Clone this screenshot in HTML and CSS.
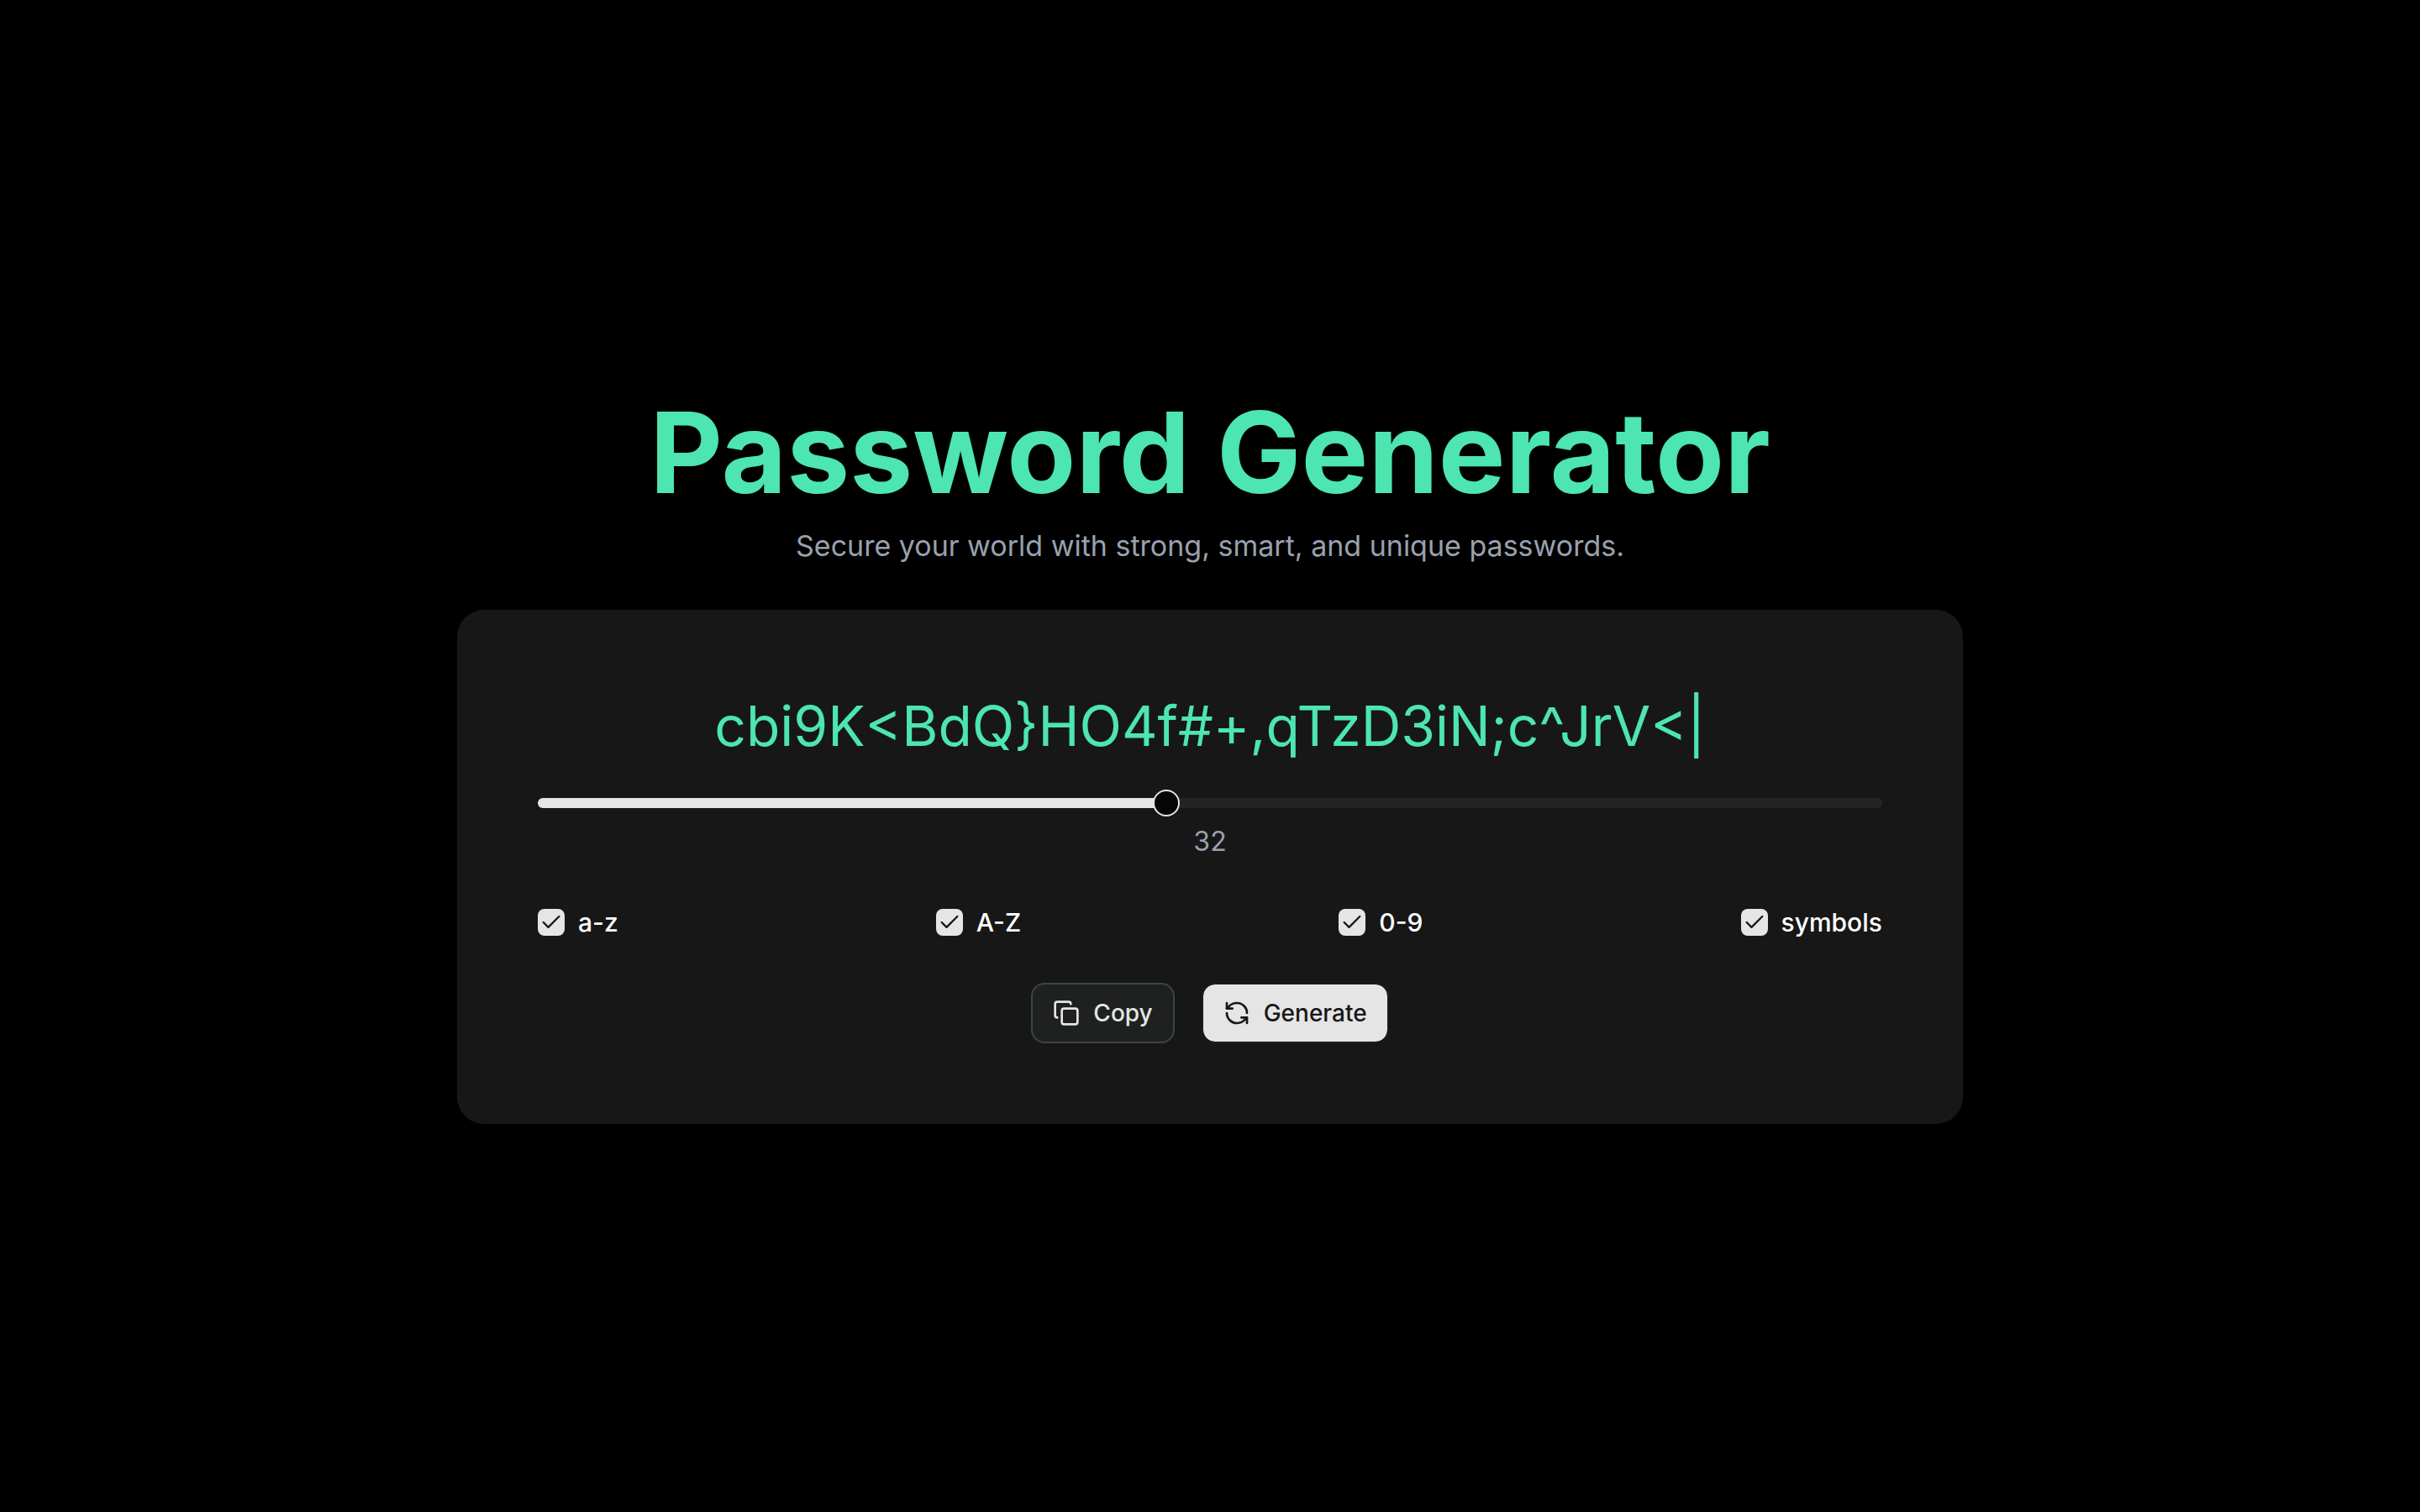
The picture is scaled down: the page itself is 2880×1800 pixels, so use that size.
FILE: index.html
```html
<!DOCTYPE html>
<html lang="en">
<head>
  <meta charset="utf-8">
  <meta name="viewport" content="width=device-width, initial-scale=1">
  <title>Password Generator</title>
  <link rel="stylesheet" href="styles.css">
</head>
<body>
  <main class="page">
    <header class="intro">
      <h1 class="title">Password Generator</h1>
      <p class="subtitle">Secure your world with strong, smart, and unique passwords.</p>
    </header>

    <section class="card" aria-label="Generator">
      <output class="password">cbi9K&lt;BdQ}HO4f#+,qTzD3iN;c^JrV&lt;|</output>

      <div class="length">
        <input class="slider" type="range" min="4" max="64" value="32" aria-label="Password length" style="--fill: 46.67%">
        <output class="length-value">32</output>
      </div>

      <div class="options">
        <label class="option"><input class="checkbox" type="checkbox" checked><span>a-z</span></label>
        <label class="option"><input class="checkbox" type="checkbox" checked><span>A-Z</span></label>
        <label class="option"><input class="checkbox" type="checkbox" checked><span>0-9</span></label>
        <label class="option"><input class="checkbox" type="checkbox" checked><span>symbols</span></label>
      </div>

      <div class="actions">
        <button class="button button-outline" type="button">
          <svg class="icon" viewBox="0 0 24 24" aria-hidden="true">
            <rect x="8" y="8" width="14" height="14" rx="2"/>
            <path d="M4 16c-1.1 0-2-.9-2-2V4c0-1.1.9-2 2-2h10c1.1 0 2 .9 2 2"/>
          </svg>
          Copy
        </button>
        <button class="button button-primary" type="button">
          <svg class="icon" viewBox="0 0 24 24" aria-hidden="true">
            <path d="M21 12a9 9 0 0 0-9-9 9.75 9.75 0 0 0-6.74 2.74L3 8"/>
            <path d="M3 3v5h5"/>
            <path d="M3 12a9 9 0 0 0 9 9 9.75 9.75 0 0 0 6.74-2.74L21 16"/>
            <path d="M16 16h5v5"/>
          </svg>
          Generate
        </button>
      </div>
    </section>
  </main>
</body>
</html>
```
FILE: styles.css
```css
:root {
  --accent: #4de5b0;
  --muted: #99a1af;
  --card: #171717;
  --light: #e5e5e5;
  --dark: #171717;
  --track: #232424;
}

* {
  box-sizing: border-box;
  margin: 0;
}

body {
  background: #000;
  color: #fff;
  font-family: Inter, "Liberation Sans", sans-serif;
  font-size: 32px;
  line-height: 48px;
}

.page {
  display: flex;
  flex-direction: column;
  align-items: center;
  justify-content: center;
  gap: 48px;
  min-height: 100vh;
}

.intro {
  display: flex;
  flex-direction: column;
  gap: 8px;
  text-align: center;
}

.title {
  color: var(--accent);
  font-size: 134px;
  font-weight: 700;
  line-height: 152px;
}

.subtitle {
  color: var(--muted);
  font-size: 34px;
  line-height: 56px;
}

.card {
  display: flex;
  flex-direction: column;
  gap: 48px;
  width: 100%;
  max-width: 1792px;
  padding: 96px;
  border-radius: 32px;
  background: var(--card);
}

.password {
  padding-top: 4px;
  color: var(--accent);
  font-size: 66px;
  line-height: 76px;
  text-align: center;
}

.length {
  display: flex;
  flex-direction: column;
  gap: 16px;
}

.length-value {
  color: var(--muted);
  text-align: center;
}

.slider {
  appearance: none;
  width: 100%;
  height: 12px;
  border-radius: 6px;
  background: linear-gradient(to right, var(--light) var(--fill), var(--track) var(--fill));
}

.slider::-webkit-slider-thumb {
  appearance: none;
  width: 32px;
  height: 32px;
  border: 2px solid var(--light);
  border-radius: 50%;
  background: #050505;
}

.options {
  display: flex;
  justify-content: space-between;
}

.option {
  display: flex;
  align-items: center;
  gap: 16px;
  font-size: 30px;
  font-weight: 500;
}

.checkbox {
  appearance: none;
  width: 32px;
  height: 32px;
  border-radius: 8px;
  background: #262626;
}

.checkbox:checked {
  background: var(--light) url("data:image/svg+xml,%3Csvg xmlns='http://www.w3.org/2000/svg' viewBox='0 0 24 24' fill='none' stroke='%23171717' stroke-width='2' stroke-linecap='round' stroke-linejoin='round'%3E%3Cpath d='M20 6 9 17l-5-5'/%3E%3C/svg%3E") center / 28px no-repeat;
}

.actions {
  display: flex;
  justify-content: center;
  gap: 32px;
}

.button {
  display: flex;
  align-items: center;
  gap: 16px;
  height: 72px;
  padding: 0 24px;
  border: 2px solid transparent;
  border-radius: 16px;
  font: 500 28px/40px Inter, "Liberation Sans", sans-serif;
}

.button-outline {
  border-color: #3a4643;
  background: #1f2121;
  color: var(--light);
}

.button-primary {
  border-color: #1b1d1c;
  background: var(--light);
  background-clip: padding-box;
  color: var(--dark);
}

.icon {
  width: 32px;
  height: 32px;
  fill: none;
  stroke: currentColor;
  stroke-width: 2;
  stroke-linecap: round;
  stroke-linejoin: round;
}
```
